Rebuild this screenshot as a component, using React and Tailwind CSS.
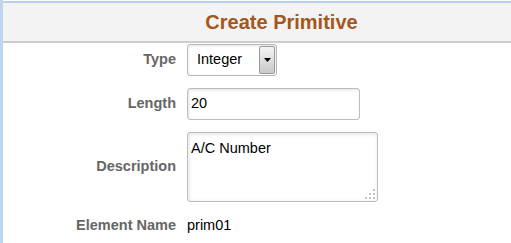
import React from 'react'

function Grip() {
  const dots = [
    [9, 1], [5, 5], [9, 5], [1, 9], [5, 9], [9, 9],
  ]
  return (
    <svg className="absolute right-[2px] bottom-[2px]" width="11" height="11" viewBox="0 0 11 11">
      {dots.map(([x, y], i) => (
        <rect key={i} x={x} y={y} width="2" height="2" fill="#c4c4c4" />
      ))}
    </svg>
  )
}

function Label({ children }) {
  return (
    <div className="text-right text-[14.5px] font-bold text-[#666666] whitespace-nowrap">{children}</div>
  )
}

export default function App() {
  return (
    <div
      className="w-[511px] h-[243px] bg-white border-l-[3px] border-[#bdd5ef] overflow-hidden"
      style={{ fontFamily: '"Liberation Sans", Arial, sans-serif' }}
    >
      <div className="pt-[1px]">
        <div className="h-[42px] bg-[#f3f3f3] border-t-2 border-b-2 border-t-[#b9d0ea] border-b-[#cdcdcd] flex items-center justify-center pl-[49px]">
          <h1 className="text-[20px] font-bold text-[#a5561b] leading-none">Create Primitive</h1>
        </div>
      </div>

      <div className="grid grid-cols-[173px_1fr] gap-x-[11px] items-center pt-[1px]">
        <Label>Type</Label>
        <div className="flex h-[32px] w-[90px] rounded-[3px] border border-[#b8b8b8] bg-white shadow-[inset_0_1px_3px_rgba(0,0,0,0.12)] overflow-hidden">
          <div className="flex-1 flex items-center pl-[9px] text-[14.5px] text-black">Integer</div>
          <div className="w-[16px] my-[1px] mr-[1px] flex items-center justify-center border border-[#9a9a9a] rounded-[2px] bg-gradient-to-b from-[#f4f4f4] to-[#c9c9c9]">
            <svg width="7" height="4" viewBox="0 0 7 4">
              <path d="M0 0 H7 L3.5 4 Z" fill="#000" />
            </svg>
          </div>
        </div>

        <div className="col-span-2 h-[12px]" />

        <Label>Length</Label>
        <div className="h-[32px] w-[173px] rounded-[3px] border border-[#bdbdbd] bg-white shadow-[inset_1px_1px_3px_rgba(0,0,0,0.12)] flex items-center pl-[3px] text-[14.5px] text-black">
          20
        </div>

        <div className="col-span-2 h-[12px]" />

        <Label>Description</Label>
        <div className="relative h-[70px] w-[191px] rounded-[3px] border border-[#bdbdbd] bg-white shadow-[inset_1px_1px_4px_rgba(0,0,0,0.12)] pl-[3px] pt-[7px] text-[14.5px] text-black leading-[17px]">
          A/C Number
          <Grip />
        </div>

        <div className="col-span-2 h-[13px]" />

        <Label>Element Name</Label>
        <div className="text-[14.5px] text-black">prim01</div>
      </div>
    </div>
  )
}
